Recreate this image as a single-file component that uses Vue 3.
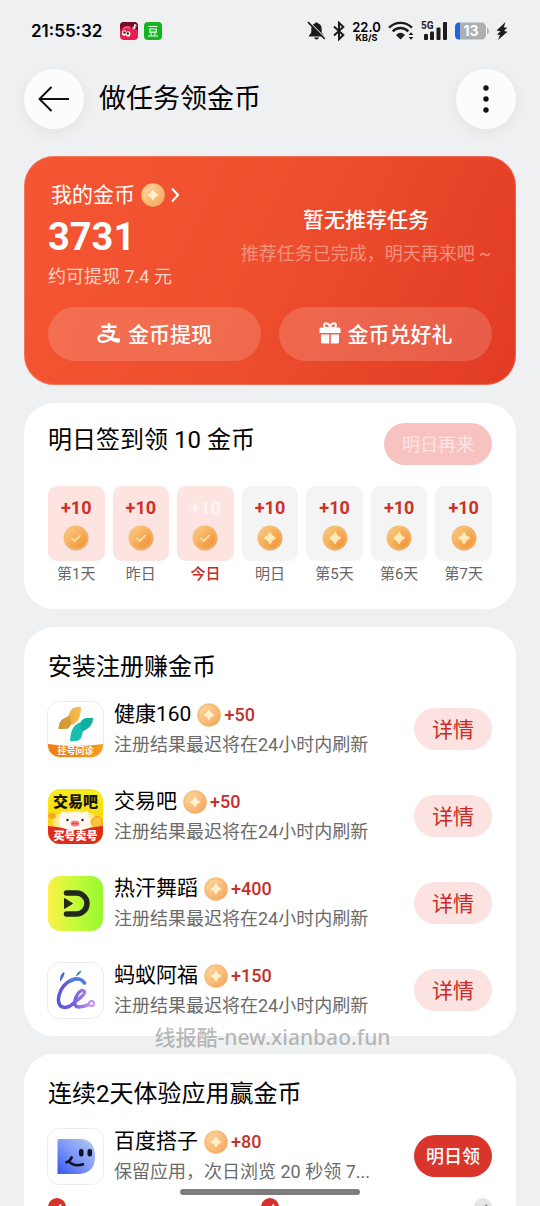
<script setup>
const days = [
  { label: '第1天', done: true },
  { label: '昨日', done: true },
  { label: '今日', done: true, today: true },
  { label: '明日' },
  { label: '第5天' },
  { label: '第6天' },
  { label: '第7天' },
]

const apps = [
  { id: 'health', name: '健康160', coins: 50 },
  { id: 'trade', name: '交易吧', coins: 50 },
  { id: 'dance', name: '热汗舞蹈', coins: 400 },
  { id: 'ant', name: '蚂蚁阿福', coins: 150 },
]

const steps = [true, true, false]
</script>

<template>
  <div class="page">
    <!-- shared gradients and coin symbols -->
    <svg class="defs" width="0" height="0" aria-hidden="true">
      <defs>
        <linearGradient id="coinRim" x1="0" y1="0" x2="1" y2="1">
          <stop offset="0" stop-color="#f8c87c" />
          <stop offset="1" stop-color="#eda154" />
        </linearGradient>
        <linearGradient id="coinFace" x1="0" y1="0" x2="1" y2="1">
          <stop offset="0" stop-color="#fbcb82" />
          <stop offset="1" stop-color="#f28e30" />
        </linearGradient>
        <linearGradient id="coinRimSoft" x1="0" y1="0" x2="1" y2="1">
          <stop offset="0" stop-color="#fac98a" />
          <stop offset="1" stop-color="#f3a75e" />
        </linearGradient>
        <linearGradient id="coinFaceSoft" x1="0" y1="0" x2="1" y2="1">
          <stop offset="0" stop-color="#fcd9a0" />
          <stop offset="1" stop-color="#f7a75e" />
        </linearGradient>
      </defs>
      <symbol id="coin-star" viewBox="0 0 26 26">
        <circle cx="13" cy="13" r="12.5" fill="url(#coinRim)" />
        <circle cx="13" cy="13" r="10" fill="url(#coinFace)" />
        <path d="M13 7Q14.600 11.400 19 13Q14.600 14.600 13 19Q11.400 14.600 7 13Q11.400 11.400 13 7Z" fill="#fdeab8" stroke="#fdeab8" stroke-width="1" stroke-linejoin="round" />
      </symbol>
      <symbol id="coin-soft" viewBox="0 0 26 26">
        <circle cx="13" cy="13" r="12.8" fill="url(#coinRimSoft)" />
        <circle cx="13" cy="13" r="10.3" fill="url(#coinFaceSoft)" />
        <path d="M13 7.500Q14.400 11.600 18.500 13Q14.400 14.400 13 18.500Q11.600 14.400 7.500 13Q11.600 11.600 13 7.500Z" fill="#fff0cf" stroke="#fff0cf" stroke-width="1" stroke-linejoin="round" />
      </symbol>
      <symbol id="coin-check" viewBox="0 0 26 26">
        <circle cx="13" cy="13" r="12.5" fill="url(#coinRim)" />
        <circle cx="13" cy="13" r="10" fill="url(#coinFace)" />
        <path d="M8.600 13L11.800 16L17.600 10" fill="none" stroke="#fbe3a8" stroke-width="1.700" />
      </symbol>
    </svg>

    <div class="status">
      <div class="status-left">
        <span class="time">21:55:32</span>
        <svg class="notice" viewBox="0 0 18 18">
          <rect width="18" height="18" rx="4" fill="#e91e50" />
          <path d="M0 6V4Q0 0 4 0H14Q18 0 18 4V8L12 7Q10 3 6 4Q2 5 1 9Z" fill="#6d1028" />
          <path d="M3 7Q6 4 10 6" fill="none" stroke="#f5556f" stroke-width="2" />
          <ellipse cx="4.2" cy="11" rx="2.2" ry="2.8" fill="#fff" />
          <ellipse cx="8.2" cy="12" rx="2.2" ry="2.8" fill="#fff" />
          <circle cx="4.5" cy="10.5" r="1.2" fill="#321" />
          <circle cx="7.8" cy="11.5" r="1.2" fill="#321" />
          <path d="M14.8 2V6M14.8 2.4Q15.4 3.6 16.6 3.7" fill="none" stroke="#fff" stroke-width="1.1" />
          <circle cx="13.9" cy="6" r="1.1" fill="none" stroke="#fff" />
        </svg>
        <svg class="notice" viewBox="0 0 18 18">
          <rect width="18" height="18" rx="4" fill="#12b51c" />
          <path d="M4.5 4.5H13.5M5.8 7H12.2V10.2H5.8ZM6.8 11.2L7.4 13M11.2 11.2L10.6 13M4 14H14" fill="none" stroke="#fff" stroke-width="1.2" />
        </svg>
      </div>
      <div class="status-right">
        <svg width="19" height="20" viewBox="0 0 19 20" fill="#1a1c1e">
          <path d="M9.5 1.3Q10.4 1.3 10.7 2.3Q14.7 3.5 14.7 8V11.5L17 14.4V15.5H2V14.4L4.3 11.5V8Q4.3 3.5 8.3 2.3Q8.6 1.3 9.5 1.3ZM7 16.6H12Q11.4 18.5 9.5 18.5Q7.6 18.5 7 16.6Z" />
          <path d="M2.200 1L19 17.600" stroke="#eff0f2" stroke-width="1.200" />
          <path d="M1 1.2L17.8 18" stroke="#1a1c1e" stroke-width="1.7" />
        </svg>
        <svg width="12" height="20" viewBox="0 0 12 20" fill="none" stroke="#1a1c1e" stroke-width="2">
          <path d="M1 5.6L10.3 14L6 18.2V1.8L10.3 6L1 14.4" />
        </svg>
        <span class="speed"><b>22.0</b><small>KB/S</small></span>
        <svg width="26" height="20" viewBox="0 0 26 20" fill="none" stroke="#1a1c1e">
          <path d="M1 6.6Q6 1.8 12.5 1.8T24 6.6" stroke-width="2.3" />
          <path d="M4.7 10.4Q8 7 12.5 7T20.3 10.4" stroke-width="2.3" />
          <path d="M8 14Q12.5 9.6 17 14L12.5 18.6Z" fill="#1a1c1e" stroke="none" />
          <path d="M20.6 14L23 11.2L25.4 14ZM20.6 16L23 18.8L25.4 16Z" fill="#1a1c1e" stroke="none" />
        </svg>
        <svg width="27" height="20" viewBox="0 0 27 20" fill="#1a1c1e">
          <text class="net" x="0" y="8">5G</text>
          <rect x="3" y="13" width="4" height="6" rx="1" />
          <rect x="9" y="10.5" width="4" height="8.500" rx="1" />
          <rect x="15.500" y="6.500" width="4" height="12.500" rx="1" />
          <rect x="22" y="1" width="4" height="18" rx="1" />
        </svg>
        <svg width="34" height="20" viewBox="0 0 34 20">
          <rect x="0" y="1.500" width="31" height="17" rx="4.500" fill="#adafb1" />
          <path d="M5 1.500V18.500H4.500Q0 18.500 0 14V6Q0 1.500 4.500 1.500Z" fill="#1769e0" />
          <path d="M32 6.500Q34 8 34 10T32 13.500Z" fill="#adafb1" />
          <text class="level" x="16" y="15" text-anchor="middle">13</text>
        </svg>
        <svg width="12" height="20" viewBox="0 0 12 20" fill="#1a1c1e">
          <path d="M9.500 1L.5 9.500L4.500 10.200L1 13.500L4 14L2 19L11.500 10.800L8 10L11.200 6.800L7.800 6.200Z" />
        </svg>
      </div>
    </div>

    <header class="header">
      <button class="round" aria-label="返回">
        <svg width="32" height="26" viewBox="0 0 32 26" fill="none" stroke="#111" stroke-width="2" stroke-linejoin="round">
          <path d="M13.500 1L1.500 13L13.500 25M1.500 13H31" />
        </svg>
      </button>
      <h1>做任务领金币</h1>
      <button class="round" aria-label="更多">
        <svg width="6" height="28" viewBox="0 0 6 28" fill="#111">
          <circle cx="3" cy="3" r="2.700" />
          <circle cx="3" cy="14" r="2.700" />
          <circle cx="3" cy="25" r="2.700" />
        </svg>
      </button>
    </header>

    <main class="content">
      <section class="wallet">
        <div class="wallet-top">
          <div class="balance">
            <a class="mine" href="#">
              我的金币
              <svg class="mine-coin"><use href="#coin-soft" /></svg>
              <svg width="8" height="16" viewBox="0 0 8 16" fill="none" stroke="#fff" stroke-width="2"><path d="M1 1.500L7 8L1 14.500" /></svg>
            </a>
            <div class="amount">3731</div>
            <div class="cash">约可提现 7.4 元</div>
          </div>
          <div class="recommend">
            <div class="recommend-title">暂无推荐任务</div>
            <div class="recommend-desc">推荐任务已完成，明天再来吧 ~</div>
          </div>
        </div>
        <div class="wallet-actions">
          <button>
            <svg width="24" height="22" viewBox="0 0 24 22" fill="none" stroke="#fff">
              <path d="M4.500 4.700H19.500M12 1V9M5.500 9.200H17.500" stroke-width="2.400" />
              <path d="M17.300 9Q14.500 19.600 6 19.800Q1.500 19.800 1.500 16.500Q1.700 13.300 6 13.200C10.500 13.200 14.500 17.600 23 18.700" stroke-width="2.300" />
              <path d="M13 15.200L23.200 16.500L22 21Q17 20.500 11.500 17Z" fill="#fff" stroke="none" />
            </svg>
            金币提现
          </button>
          <button>
            <svg width="22" height="22" viewBox="0 0 22 22" fill="#fff">
              <path d="M10.500 6Q5 6.500 5 3.500Q5 1.300 7.200 1.300Q10 1.500 11 5.500Q12 1.500 14.800 1.300Q17 1.300 17 3.500Q17 6.500 11.500 6" fill="none" stroke="#fff" stroke-width="1.900" />
              <path d="M2.200 5.500H19.800Q21.500 5.500 21.500 7V11H.5V7Q.5 5.500 2.200 5.500Z" />
              <path d="M2 12.500H10.200V21.500H3.500Q2 21.500 2 20ZM11.800 12.500H20V20Q20 21.500 18.500 21.500H11.800Z" />
            </svg>
            金币兑好礼
          </button>
        </div>
      </section>

      <section class="card signin">
        <div class="signin-head">
          <h2>明日签到领 10 金币</h2>
          <button class="pill later" disabled>明日再来</button>
        </div>
        <ul class="days">
          <li v-for="day in days" :key="day.label" :class="{ done: day.done, today: day.today }">
            <div class="tile">
              <span class="plus">+10</span>
              <svg class="day-coin"><use :href="day.done ? '#coin-check' : '#coin-star'" /></svg>
            </div>
            <span class="day-label">{{ day.label }}</span>
          </li>
        </ul>
      </section>

      <section class="card">
        <h2>安装注册赚金币</h2>
        <ul class="tasks">
          <li v-for="app in apps" :key="app.id" class="task">
            <svg v-if="app.id === 'health'" class="logo outlined" viewBox="0 0 55 55">
              <defs>
                <linearGradient id="healthBar" x1="0" x2="1"><stop offset="0" stop-color="#ef7f12" /><stop offset="1" stop-color="#f79a19" /></linearGradient>
                <linearGradient id="healthGold" x1="0" x2="1"><stop offset="0" stop-color="#e39f38" /><stop offset="1" stop-color="#f8bf4e" /></linearGradient>
              </defs>
              <rect width="55" height="55" fill="#fff" />
              <path d="M22 10Q24 5.500 29 5H33Q33 14 29.500 19Q26 23 22.500 23Q21 27 17 27H10.500Q11 18 17 16Q20.500 15 22 10Z" fill="url(#healthGold)" />
              <path d="M21 14Q24 19 22.500 23Q21 27 17 27H10.500Q11 18 17 16Q20 15.500 21 14Z" fill="#d59a38" />
              <path d="M45 16Q44.500 24 38 27.500Q34.500 28.500 34 33Q33 39 27 39H22Q22.500 28 27 23.500Q30 20.500 33 20Q35 16 40 16Z" fill="#18bfae" />
              <path d="M45 16Q44.500 24 38 27.500L34.500 29Q32 25 33 20Q35 16 40 16Z" fill="#0fb0a2" />
              <path d="M0 42Q27 46 55 42V55H0Z" fill="url(#healthBar)" />
              <text class="logo-serif" x="27.500" y="51.500" text-anchor="middle">挂号问诊</text>
            </svg>

            <svg v-else-if="app.id === 'trade'" class="logo" viewBox="0 0 55 55">
              <defs>
                <linearGradient id="tradeSky" x1="0" y1="0" x2="0" y2="1"><stop offset="0" stop-color="#f6ee18" /><stop offset="1" stop-color="#ffc414" /></linearGradient>
              </defs>
              <rect width="55" height="55" fill="url(#tradeSky)" />
              <path d="M5 35Q3 22 27 22T50 35L45 44H9Z" fill="#ffe98b" />
              <ellipse cx="4" cy="27" rx="4" ry="3" fill="#f7a91d" />
              <circle cx="49" cy="33" r="5.500" fill="#ffc23c" stroke="#ef9b1f" />
              <path d="M12 27L14 22L20 24Q27 22 34 24L40 22L41 28Q44 34 41 42H14Q9 34 12 27Z" fill="#fff8ee" />
              <path d="M0 37Q14 38 21 41H34Q42 38 55 37V55H0Z" fill="#df2c1b" />
              <ellipse cx="27" cy="34.500" rx="4.500" ry="3" fill="#f5808d" />
              <circle cx="25.500" cy="34.500" r=".9" fill="#a32e42" />
              <circle cx="28.500" cy="34.500" r=".9" fill="#a32e42" />
              <circle cx="19.500" cy="31" r="1.200" fill="#222" />
              <circle cx="34.500" cy="31" r="1.200" fill="#222" />
              <text class="logo-name" x="27.500" y="17.500" text-anchor="middle">交易吧</text>
              <text class="logo-foot" x="27.500" y="51" text-anchor="middle">买号卖号</text>
            </svg>

            <svg v-else-if="app.id === 'dance'" class="logo" viewBox="0 0 55 55">
              <defs>
                <linearGradient id="danceBg" x1="0" x2="1"><stop offset="0" stop-color="#fdf047" /><stop offset=".45" stop-color="#c9fb3c" /><stop offset="1" stop-color="#97f72f" /></linearGradient>
              </defs>
              <rect width="55" height="55" fill="url(#danceBg)" />
              <path d="M18.500 17H28.500A10.500 10.500 0 0 1 28.500 38H18.500" fill="none" stroke="#23281c" stroke-width="5.500" stroke-linecap="round" />
              <path d="M16.500 22.500L24.500 27.500L16.500 32.500Z" fill="#23281c" stroke="#23281c" stroke-linejoin="round" />
            </svg>

            <svg v-else class="logo outlined" viewBox="0 0 55 55" fill="none" stroke-linecap="round">
              <defs>
                <linearGradient id="antLine" x1="0" x2="1"><stop offset="0" stop-color="#5a55d8" /><stop offset=".5" stop-color="#705fdc" /><stop offset="1" stop-color="#bd8cf0" /></linearGradient>
              </defs>
              <rect width="55" height="55" fill="#fff" />
              <path d="M12.500 17.500Q12.500 11 16 9.500Q16.500 12 12.500 17.500Z" fill="#4769cf" stroke="#4769cf" />
              <path d="M28.500 12.500Q29.500 9 33 8Q32 11 28.500 12.500Z" fill="#4b8794" stroke="#4b8794" />
              <path d="M36.500 20Q33 15 27 16Q18 18 13 27Q8 38 12.500 43Q19 47.500 28 38Q38 31 36.500 28.500Q32.500 25 28 34Q24.500 44 31 44Q37 43.500 40.500 41.500" stroke="url(#antLine)" stroke-width="3.400" />
              <path d="M36.500 20Q33 15 27 16L22 18.300" stroke="#4f7fdc" stroke-width="3.400" />
              <circle cx="43.500" cy="40.500" r="2.500" stroke="#c58ceb" stroke-width="2" />
            </svg>

            <div class="info">
              <div class="name">
                {{ app.name }}
                <svg class="name-coin"><use href="#coin-soft" /></svg>
                <span class="reward">+{{ app.coins }}</span>
              </div>
              <div class="desc">注册结果最迟将在24小时内刷新</div>
            </div>
            <button class="pill detail">详情</button>
          </li>
        </ul>
      </section>

      <section class="card">
        <h2>连续2天体验应用赢金币</h2>
        <div class="task">
          <svg class="logo outlined" viewBox="0 0 55 55">
            <defs>
              <linearGradient id="duBg" x1="1" y1="0" x2="0" y2="1"><stop offset="0" stop-color="#b5cdf4" /><stop offset=".5" stop-color="#8099f6" /><stop offset="1" stop-color="#3658ef" /></linearGradient>
            </defs>
            <rect width="55" height="55" fill="#fff" />
            <path d="M11 10H33Q47 11 47 27.500Q47 44 31 45H10Q9.500 45 9.500 44V11.500Q9.500 10 11 10Z" fill="url(#duBg)" />
            <rect x="31" y="20" width="4.500" height="7.500" rx="2" fill="#101326" />
            <rect x="39.500" y="20" width="4.500" height="7.500" rx="2" fill="#101326" />
            <path d="M17.500 33.500Q22 33 24 27.500M20.500 32Q26 38.500 36 35" fill="none" stroke="#101326" stroke-width="2.600" />
          </svg>
          <div class="info">
            <div class="name">
              百度搭子
              <svg class="name-coin"><use href="#coin-soft" /></svg>
              <span class="reward">+80</span>
            </div>
            <div class="desc">保留应用，次日浏览 20 秒领 7...</div>
          </div>
          <button class="pill claim">明日领</button>
        </div>
        <div class="steps">
          <svg v-for="(done, i) in steps" :key="i" class="step" :class="{ reached: done }" viewBox="0 0 18 18">
            <circle cx="9" cy="9" r="9" />
            <path d="M5 9L8 12L13 6.500" fill="none" stroke-width="1.800" />
          </svg>
        </div>
      </section>
    </main>

    <div class="watermark">线报酷-new.xianbao.fun</div>
    <div class="home-bar"></div>
  </div>
</template>

<style>
body {
  background: #eff0f2;
}
</style>

<style scoped>
.page {
  position: relative;
  height: 100vh;
  overflow: hidden;
  background: #eff0f2;
  color: #000;
  font-family: Roboto, "Noto Sans CJK SC", sans-serif;
}
.defs {
  position: absolute;
}
svg {
  display: block;
  flex: none;
}
h1,
h2,
ul {
  margin: 0;
  padding: 0;
  list-style: none;
}
button {
  border: none;
  padding: 0 0 2px;
  font-family: inherit;
  cursor: pointer;
}

.status {
  display: flex;
  align-items: center;
  justify-content: space-between;
  height: 62px;
  padding: 0 32px 0 31px;
}
.status-left {
  display: flex;
  align-items: center;
  gap: 6px;
}
.time {
  margin-right: 12px;
  font: 600 17px/24px Inter, sans-serif;
}
.notice {
  width: 18px;
  height: 18px;
}
.status-right {
  display: flex;
  align-items: center;
  gap: 7px;
}
.speed {
  display: flex;
  flex-direction: column;
  align-items: center;
  width: 29px;
  font-family: Inter, sans-serif;
}
.speed b {
  font-size: 13px;
  font-weight: 600;
  line-height: 12px;
}
.speed small {
  font-size: 9px;
  font-weight: 700;
  line-height: 9px;
}
.net {
  font: 700 10px Roboto, sans-serif;
}
.level {
  font: 700 14px Inter, sans-serif;
  fill: #fff;
}

.header {
  display: flex;
  align-items: center;
  padding: 7px 24px 27px;
}
.header h1 {
  flex: 1;
  margin-left: 15px;
  font-size: 27px;
  font-weight: 400;
  line-height: 40px;
}
.round {
  display: flex;
  align-items: center;
  justify-content: center;
  width: 60px;
  height: 60px;
  padding: 0;
  border-radius: 50%;
  background: #fcfcfd;
  box-shadow: 0 4px 16px rgba(0, 0, 0, 0.06);
}

.content {
  display: grid;
  gap: 18px;
  padding: 0 24px;
}
.wallet {
  padding: 24px;
  border-radius: 30px;
  background: linear-gradient(115deg, #f65633 0%, #ed4e2d 50%, #e23b25 100%);
  box-shadow: inset 0 0 0 1px rgba(255, 255, 255, 0.2);
  color: #fff;
}
.wallet-top {
  display: flex;
  margin-bottom: 17px;
}
.balance {
  flex: none;
  width: 192px;
}
.mine {
  display: flex;
  align-items: center;
  gap: 6px;
  padding-left: 3px;
  color: #fff;
  font-size: 21px;
  line-height: 30px;
  text-decoration: none;
}
.mine-coin {
  width: 24px;
  height: 24px;
}
.amount {
  font-size: 38px;
  font-weight: 700;
  line-height: 54px;
}
.cash {
  color: #ffd5c8;
  font-size: 18px;
  line-height: 26px;
}
.recommend {
  flex: 1;
  padding-top: 23px;
  text-align: center;
  white-space: nowrap;
}
.recommend-title {
  font-size: 21px;
  font-weight: 500;
  line-height: 34px;
}
.recommend-desc {
  color: #f4927d;
  font-size: 18px;
  line-height: 34px;
}
.wallet-actions {
  display: grid;
  grid-template-columns: 1fr 1fr;
  gap: 18px;
}
.wallet-actions button {
  display: flex;
  align-items: center;
  justify-content: center;
  gap: 7px;
  height: 54px;
  border-radius: 27px;
  background: rgba(255, 255, 255, 0.16);
  color: #fff;
  font-size: 21px;
  font-weight: 500;
}

.card {
  padding: 23px 24px 15px;
  border-radius: 30px;
  background: #fff;
}
.card h2 {
  margin-bottom: 14px;
  font-size: 24px;
  font-weight: 400;
  line-height: 34px;
}
.pill {
  flex: none;
  height: 42px;
  border-radius: 21px;
}
.card.signin {
  padding-top: 20px;
  padding-bottom: 23px;
}
.signin-head {
  display: flex;
  align-items: flex-start;
  justify-content: space-between;
  margin-bottom: 21px;
}
.signin-head h2 {
  margin: 0;
}
.later {
  width: 108px;
  background: #f7c3c1;
  color: #fde5e3;
  font-size: 18px;
}
.days {
  display: grid;
  grid-template-columns: repeat(7, 1fr);
  gap: 8px;
  text-align: center;
}
.tile {
  display: flex;
  flex-direction: column;
  align-items: center;
  height: 75px;
  padding-top: 12px;
  border-radius: 9px;
  background: #f4f4f4;
  box-sizing: border-box;
}
.done .tile {
  background: #fde4e1;
}
.plus {
  color: #cd3227;
  font-size: 18px;
  font-weight: 700;
  line-height: 20px;
}
.today .plus {
  color: #fff4f2;
}
.day-coin {
  width: 26px;
  height: 26px;
  margin-top: 7px;
}
.day-label {
  display: block;
  margin-top: 1px;
  color: #666;
  font-size: 15px;
  line-height: 24px;
}
.today .day-label {
  color: #c4281f;
  font-weight: 500;
}

.tasks {
  display: grid;
  gap: 25px;
}
.task {
  display: flex;
  align-items: center;
  gap: 11px;
}
.logo {
  width: 55px;
  height: 55px;
  border-radius: 12px;
}
.outlined {
  box-shadow: 0 0 0 1px #ececec;
}
.logo-serif {
  fill: #fff;
  font: 700 9px "Noto Sans CJK SC", sans-serif;
}
.logo-name {
  fill: #17160c;
  font: 900 15px "Noto Sans CJK SC", sans-serif;
}
.logo-foot {
  fill: #fff;
  font: 900 11px "Noto Sans CJK SC", sans-serif;
}
.info {
  flex: 1;
  min-width: 0;
  padding-top: 1px;
}
.name {
  display: flex;
  align-items: center;
  font-size: 21px;
  line-height: 31px;
}
.name-coin {
  width: 24px;
  height: 24px;
  margin: 0 3px 0 6px;
}
.reward {
  color: #c5302a;
  font-size: 18px;
  font-weight: 500;
}
.desc {
  overflow: hidden;
  color: #6b6b6b;
  font-size: 18px;
  line-height: 30px;
  text-overflow: ellipsis;
  white-space: nowrap;
}
.detail {
  width: 78px;
  background: #fce2e1;
  color: #c92c26;
  font-size: 21px;
}
.claim {
  width: 78px;
  background: #d9352a;
  color: #fff;
  font-size: 18px;
  font-weight: 500;
}
.steps {
  display: flex;
  justify-content: space-between;
  margin-top: 11px;
}
.step {
  width: 18px;
  height: 18px;
  fill: #e6e6e6;
  stroke: #8e8e8e;
}
.step circle {
  stroke: none;
}
.step.reached {
  fill: #d4322a;
  stroke: #fff;
}

.watermark {
  position: absolute;
  right: 0;
  bottom: 154px;
  left: 0;
  padding-left: 5px;
  color: rgba(120, 120, 120, 0.5);
  font: 500 21px/30px "Noto Sans", "Noto Sans CJK SC", sans-serif;
  text-align: center;
}
.home-bar {
  position: absolute;
  bottom: 11px;
  left: 50%;
  width: 180px;
  height: 6px;
  border-radius: 3px;
  background: #7d7d7d;
  transform: translateX(-50%);
}
</style>
